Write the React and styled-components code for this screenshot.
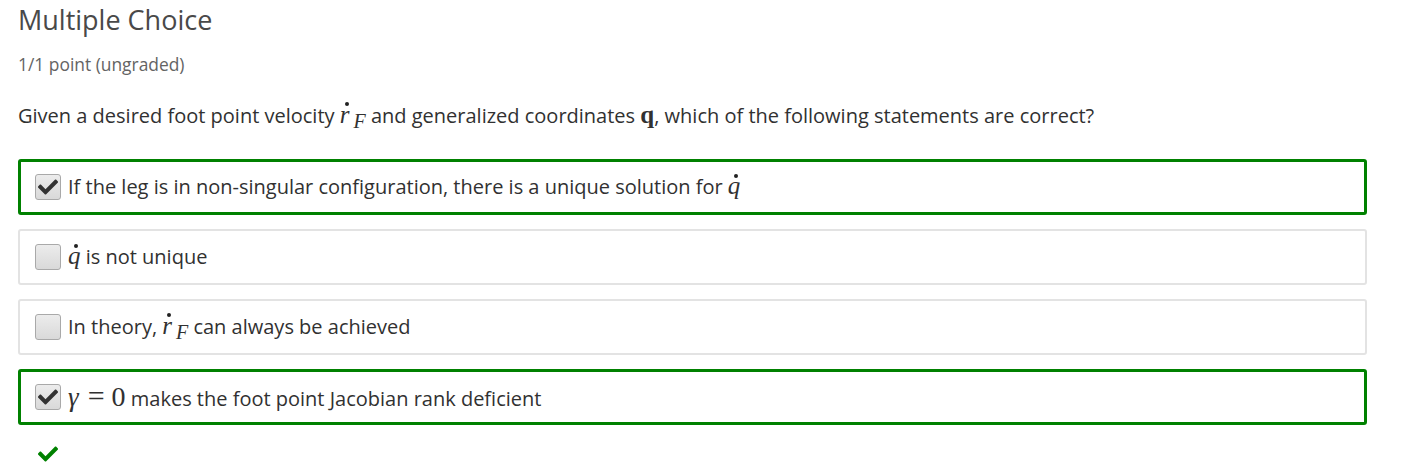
import React from "react";
import styled, { createGlobalStyle } from "styled-components";

const Global = createGlobalStyle`
  html, body { margin: 0; padding: 0; background: #fff; }
  body { font-family: "Open Sans", "Noto Sans", sans-serif; color: #313131; }
`;

const Page = styled.div`
  width: 1409px;
  height: 471px;
  box-sizing: border-box;
  padding: 2px 42px 0 18px;
  overflow: hidden;
`;

const Title = styled.h2`
  margin: 0;
  font-size: 27px;
  font-weight: 400;
  line-height: 36px;
  color: #494949;
`;

const Score = styled.div`
  margin-top: 14px;
  font-size: 17.4px;
  line-height: 24px;
  color: #646464;
`;

const Question = styled.p`
  margin: 26px 0 0;
  font-size: 20px;
  line-height: 28px;
  color: #313131;
`;

const Options = styled.div`
  margin-top: 29px;
  display: flex;
  flex-direction: column;
  gap: 14px;
`;

const Option = styled.label`
  display: flex;
  align-items: center;
  gap: 7px;
  box-sizing: border-box;
  height: 56px;
  padding: 0 0 0 ${(p) => (p.$correct ? "14px" : "15px")};
  border: ${(p) => (p.$correct ? "3px solid #008100" : "2px solid #e3e3e3")};
  border-radius: 3px;
  font-size: 20px;
  color: #313131;
`;

const Text = styled.span`
  line-height: 28px;
`;

const Box = styled.span`
  position: relative;
  flex: none;
  width: 24px;
  height: 24px;
  border: 1px solid #a9a9a9;
  border-radius: 3px;
  background: linear-gradient(#ececec, #d9d9d9);
  display: flex;
  align-items: center;
  justify-content: center;
`;

const Math = styled.span`
  font-family: "Liberation Serif", "DejaVu Serif", serif;
  font-style: ${(p) => (p.$upright ? "normal" : "italic")};
  font-weight: ${(p) => (p.$bold ? 700 : 400)};
  font-size: ${(p) => p.$size || "24px"};
  margin: ${(p) => p.$m || "0"};
  line-height: 1;
`;

const Dotted = styled.span`
  position: relative;
  display: inline-block;
  &::before {
    content: "";
    position: absolute;
    left: ${(p) => p.$dx || "50%"};
    top: ${(p) => p.$dy || "2px"};
    width: 4px;
    height: 4px;
    border-radius: 50%;
    background: #222;
  }
`;

const Sub = styled.sub`
  font-size: 0.8em;
  vertical-align: -5px;
  line-height: 0;
  margin-left: 4px;
`;

const Feedback = styled.div`
  margin-top: 17px;
  padding-left: 20px;
  height: 24px;
  display: flex;
  align-items: center;
`;

const Check = ({ color = "#333", size = 18 }) => (
  <svg width={size} height={size} viewBox="0 0 512 512">
    <path
      fill={color}
      d="M173.9 439.4L7.5 273c-10-10-10-26.2 0-36.2l36.2-36.2c10-10 26.2-10 36.2 0L192 312.7 432.1 72.6c10-10 26.2-10 36.2 0l36.2 36.2c10 10 10 26.2 0 36.2L210.1 439.4c-10 10-26.2 10-36.2 0z"
    />
  </svg>
);

const RF = () => (
  <Math $size="25px">
    <Dotted $dx="5px" $dy="0px">r</Dotted>
    <Sub>F</Sub>
  </Math>
);

const QDot = () => (
  <Math $size="25px">
    <Dotted $dx="6px" $dy="1px">q</Dotted>
  </Math>
);

const options = [
  {
    correct: true,
    content: (
      <>
        If the leg is in non-singular configuration, there is a unique solution for <QDot />
      </>
    ),
  },
  { correct: false, content: (<><QDot /> is not unique</>) },
  { correct: false, content: (<>In theory, <RF /> can always be achieved</>) },
  {
    correct: true,
    content: (
      <>
        <Math $size="27px">γ</Math>
        <Math $upright $size="30px" $m="0 7px 0 9px">=</Math>
        <Math $upright $size="28px">0</Math> makes the foot point Jacobian rank deficient
      </>
    ),
  },
];

export default function App() {
  return (
    <>
      <Global />
      <Page>
        <Title>Multiple Choice</Title>
        <Score>1/1 point (ungraded)</Score>
        <Question>
          Given a desired foot point velocity <RF /> and generalized coordinates{" "}
          <Math $upright $bold $size="25px">q</Math>, which of the following statements are correct?
        </Question>
        <Options>
          {options.map((o, i) => (
            <Option key={i} $correct={o.correct}>
              <Box>{o.correct && <Check size={20} color="#333" />}</Box>
              <Text>{o.content}</Text>
            </Option>
          ))}
        </Options>
        <Feedback>
          <Check size={20} color="#008100" />
        </Feedback>
      </Page>
    </>
  );
}
